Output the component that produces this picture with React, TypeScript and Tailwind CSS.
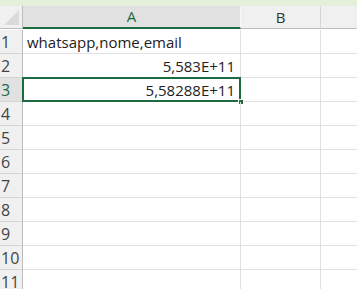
import React from 'react';

const rows = [1, 2, 3, 4, 5, 6, 7, 8, 9, 10, 11];

const cellData: Record<number, { text: string; right?: boolean }> = {
  1: { text: 'whatsapp,nome,email' },
  2: { text: '5,583E+11', right: true },
  3: { text: '5,58288E+11', right: true },
};

const App: React.FC = () => {
  const selectedRow = 3;

  return (
    <div
      className="w-[357px] h-[289px] overflow-hidden bg-white text-[15px] text-[#222]"
      style={{ fontFamily: '"Open Sans", "Liberation Sans", sans-serif' }}
    >
      <div className="h-[6px] bg-[#e6eedc]" />

      <div className="grid grid-cols-[23px_218px_80px_1fr] auto-rows-[24px]">
        {/* header row */}
        <div className="relative h-[23px] bg-[#f0f0f0] border-r border-b border-[#bdbdbd]">
          <div className="absolute right-[3px] bottom-[3px] w-0 h-0 border-l-[15px] border-l-transparent border-b-[15px] border-b-[#dadada]" />
        </div>
        <div className="h-[23px] bg-[#e1e1e1] border-b-2 border-[#1d6b41] border-r border-r-[#f8f8f8] flex items-center justify-center text-[#1d6b41]">
          A
        </div>
        <div className="h-[23px] bg-[#f0f0f0] border-b border-[#bdbdbd] border-r border-r-[#d6d6d6] flex items-center justify-center text-[#333]">
          B
        </div>
        <div className="h-[23px] bg-[#f0f0f0] border-b border-[#bdbdbd]" />

        {rows.map((r) => {
          const d = cellData[r];
          const sel = r === selectedRow;
          return (
            <React.Fragment key={r}>
              <div
                className={`border-r border-r-[#bdbdbd] border-b border-b-[#d4d4d4] flex items-end pb-[1px] pl-[1px] leading-[20px] text-[16px] ${
                  sel ? 'bg-[#e1e1e1] text-[#1d6b41]' : 'bg-[#f0f0f0] text-[#444]'
                }`}
              >
                {r}
              </div>
              <div
                className={`relative border-r border-b border-[#e1e1e1] flex items-end pb-[1px] px-[4px] leading-[20px] whitespace-nowrap ${
                  d?.right ? 'justify-end pr-[5px]' : ''
                }`}
              >
                {d?.text}
                {sel && (
                  <>
                    <div className="absolute -left-[1px] -top-[1px] -right-[1px] -bottom-[1px] border-2 border-[#1d6b41] pointer-events-none" />
                    <div className="absolute -right-[4px] -bottom-[4px] w-[6px] h-[6px] bg-[#1d6b41] border border-white" />
                  </>
                )}
              </div>
              <div className="border-r border-b border-[#e1e1e1]" />
              <div className="border-b border-[#e1e1e1]" />
            </React.Fragment>
          );
        })}
      </div>
    </div>
  );
};

export default App;
